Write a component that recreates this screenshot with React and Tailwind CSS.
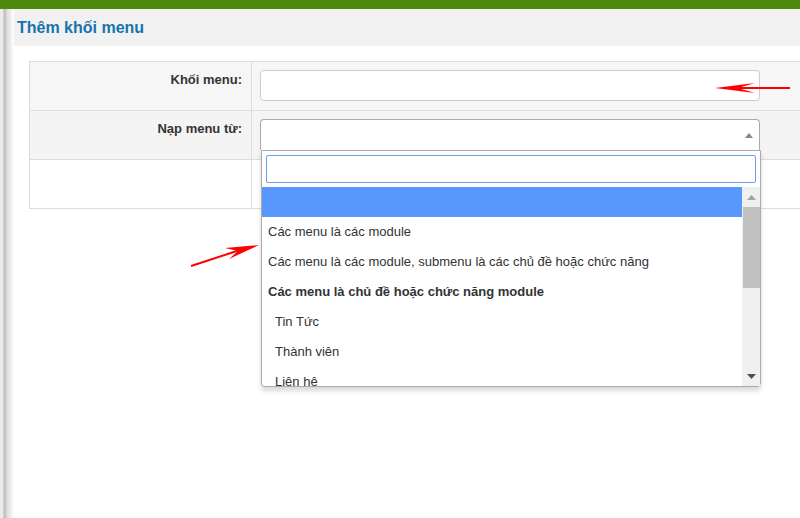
import React from 'react'

const OPTIONS = [
  { label: '', active: true },
  { label: 'Các menu là các module' },
  { label: 'Các menu là các module, submenu là các chủ đề hoặc chức năng' },
  { label: 'Các menu là chủ đề hoặc chức năng module', bold: true },
  { label: 'Tin Tức', child: true },
  { label: 'Thành viên', child: true },
  { label: 'Liên hê', child: true },
]

function Arrows() {
  return (
    <svg className="absolute inset-0 pointer-events-none" width="800" height="518">
      {/* arrow pointing to the input */}
      <line x1="790" y1="88" x2="735" y2="88" stroke="#ff0000" strokeWidth="2" />
      <path d="M715 88 L755 83 L738 88 L755 93 Z" fill="#ff0000" />
      {/* arrow pointing to the options */}
      <line x1="191" y1="266" x2="240" y2="250" stroke="#ff0000" strokeWidth="2" />
      <path d="M259 245 L225 248 L238 251 L229 259 Z" fill="#ff0000" />
    </svg>
  )
}

export default function App() {
  return (
    <div
      className="relative w-[800px] h-[518px] overflow-hidden bg-white flex flex-col"
      style={{ fontFamily: '"Liberation Sans", Arial, sans-serif' }}
    >
      <div className="h-[9px] bg-[#4e8a0e] shrink-0" />
      <div className="flex flex-1 min-h-0">
        {/* left shadow strip */}
        <div className="w-[14px] shrink-0 bg-[linear-gradient(to_right,#ebebeb_0px,#ebebeb_3px,#b8b8b8_4px,#dcdcdc_7px,#ffffff_14px)]" />

        <div className="flex-1 min-w-0 overflow-hidden flex flex-col">
          <div className="h-[37px] shrink-0 bg-[#f1f1f1] flex items-center pl-[3px]">
            <h1 className="text-[16px] font-bold text-[#1872ad]">Thêm khối menu</h1>
          </div>

          <div className="pt-[15px] pl-[15px]">
            <div className="relative w-[800px] border-l border-t border-[#dddddd] text-[13px] text-[#333]">
              {/* row 1 */}
              <div className="flex h-[49px] bg-[#f6f6f6] border-b border-[#dddddd]">
                <div className="w-[222px] border-r border-[#dddddd] text-right pr-[9px] pt-[10px] font-bold leading-[16px]">
                  Khối menu:
                </div>
                <div className="pl-[8px] pt-[8px]">
                  <div className="w-[500px] h-[31px] bg-white border border-[#cccccc] rounded-[4px]" />
                </div>
              </div>
              {/* row 2 */}
              <div className="flex h-[49px] bg-[#f4f4f4] border-b border-[#dddddd]">
                <div className="w-[222px] border-r border-[#dddddd] text-right pr-[9px] pt-[10px] font-bold leading-[16px]">
                  Nạp menu từ:
                </div>
                <div className="pl-[8px] pt-[8px] relative">
                  <div className="w-[500px] h-[31px] bg-white border border-b-0 border-[#aaaaaa] rounded-t-[4px] flex items-center justify-end pr-[6px]">
                    <svg width="8" height="5" viewBox="0 0 8 5">
                      <path d="M0 5 L4 0 L8 5 Z" fill="#888888" />
                    </svg>
                  </div>
                </div>
              </div>
              {/* row 3 */}
              <div className="flex h-[49px] bg-white border-b border-[#dddddd]">
                <div className="w-[222px] border-r border-[#dddddd]" />
                <div />
              </div>

              {/* dropdown */}
              <div className="absolute left-[231px] top-[88px] w-[500px] h-[237px] bg-white border border-[#aaaaaa] shadow-[0_4px_5px_rgba(0,0,0,0.15)] rounded-b-[4px] flex flex-col">
                <div className="p-[4px]">
                  <div className="h-[28px] border border-[#6e9fe8] rounded-[2px] bg-white" />
                </div>
                <div className="flex flex-1 overflow-hidden">
                  <div className="flex-1 overflow-hidden">
                    {OPTIONS.map((o, i) => (
                      <div
                        key={i}
                        className={`h-[30px] flex items-center text-[13px] whitespace-nowrap ${o.child ? 'pl-[13px]' : 'pl-[6px]'} ${o.bold ? 'font-bold' : ''} ${o.active ? 'bg-[#5897fb] text-white' : 'text-[#333]'}`}
                      >
                        {o.label}
                      </div>
                    ))}
                  </div>
                  <div className="w-[18px] bg-[#f0f0f0] flex flex-col items-center">
                    <div className="h-[20px] flex items-center justify-center">
                      <svg width="9" height="5" viewBox="0 0 9 5">
                        <path d="M0 5 L4.5 0 L9 5 Z" fill="#a3a3a3" />
                      </svg>
                    </div>
                    <div className="w-[17px] h-[81px] bg-[#c1c1c1]" />
                    <div className="flex-1" />
                    <div className="h-[20px] flex items-center justify-center">
                      <svg width="9" height="5" viewBox="0 0 9 5">
                        <path d="M0 0 L4.5 5 L9 0 Z" fill="#505050" />
                      </svg>
                    </div>
                  </div>
                </div>
              </div>
            </div>
          </div>
        </div>
      </div>
      <Arrows />
    </div>
  )
}
